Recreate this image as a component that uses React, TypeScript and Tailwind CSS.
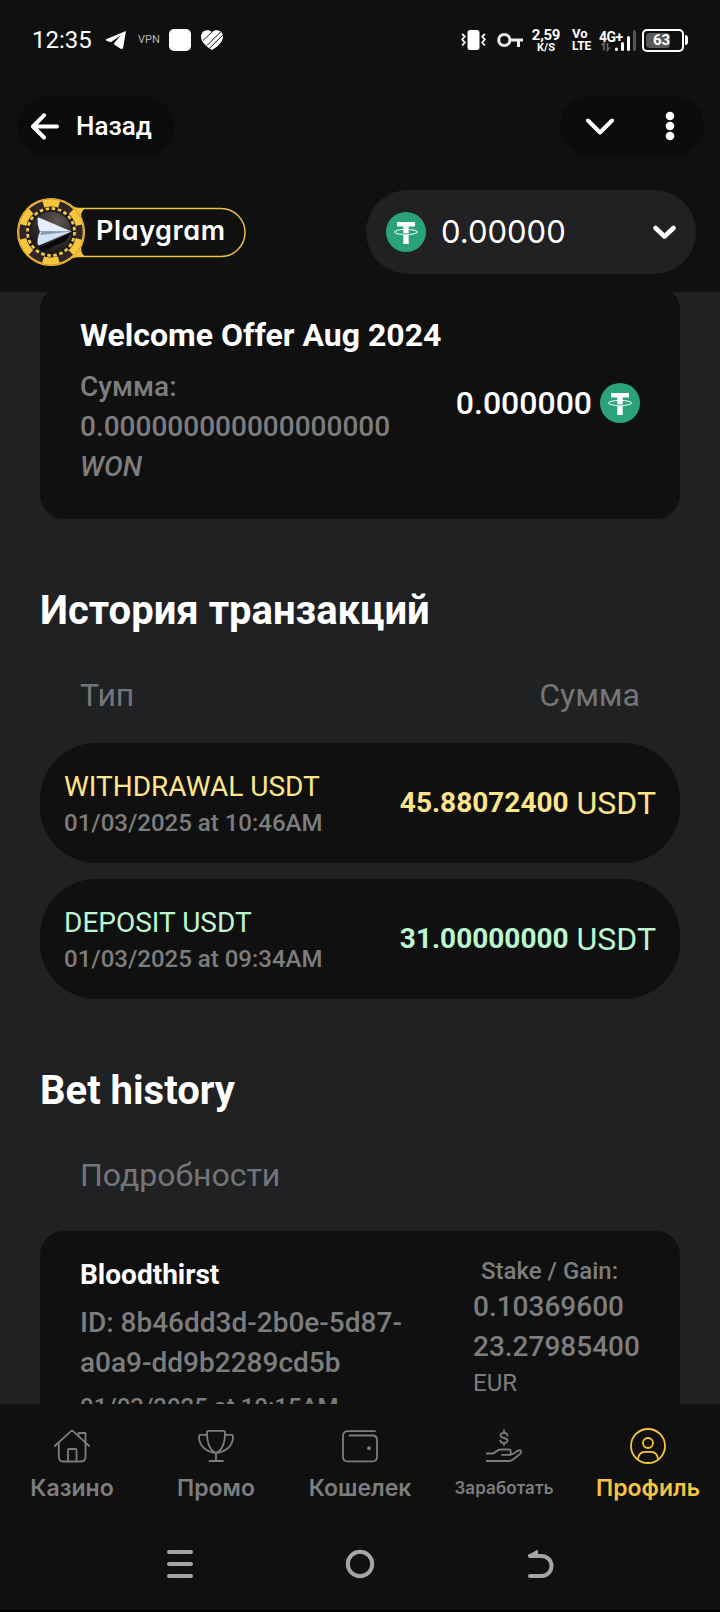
import React from 'react';

const StatusBar: React.FC = () => {
  return (
    <div className="flex h-24 items-start justify-between pl-8 pr-8 pt-6 text-white">
      <div className="flex h-8 items-center">
        <span className="w-[60px] text-[24px] leading-8">12:35</span>
        <svg className="ml-3.5" width="20" height="18" viewBox="0 0 20 18" fill="#fff">
          <path d="M20 0 L0 8.2 L0 9.6 L4.8 11.2 L15 4.2 L8.2 12 L8.2 13.4 L15 18 L17 17.6 Z" />
        </svg>
        <span className="ml-3 w-5 text-[11px] text-[#b5b5b5]">VPN</span>
        <span className="ml-[11px] size-[22px] rounded-[5px] bg-white" />
        <svg className="ml-2.5" width="22" height="20" viewBox="0 0 22 20">
          <path d="M11 2 C14-1 22-.5 22 7 C22 12 16 17 11 20 C6 17 0 12 0 7 C0-.5 8-1 11 2Z" fill="#fff" />
          <path d="M2 10.5 L12.5.5 M6 15.5 L20 1.5 M8.8 18 L22 4.8" stroke="#111" strokeWidth="1" />
        </svg>
      </div>
      <div className="flex h-8 items-center">
        <svg width="25" height="22" viewBox="0 0 25 22">
          <rect x="6.5" y="1" width="12" height="20" rx="2.5" fill="#fff" />
          <path d="M1.2 5 L3.8 7.5 L1.2 10.5 L3.8 13.5 L1.2 16.5 M23.8 5 L21.2 7.5 L23.8 10.5 L21.2 13.5 L23.8 16.5" fill="none" stroke="#fff" strokeWidth="1.8" />
        </svg>
        <svg className="ml-[11px]" width="26" height="16" viewBox="0 0 26 16" fill="none" stroke="#eee" strokeWidth="3">
          <circle cx="7.3" cy="8" r="5.6" />
          <path d="M13 8 H26 M21.5 8 V15" />
        </svg>
        <div className="ml-[7px] flex w-8 flex-col items-center font-bold leading-3">
          <span className="text-[15px] leading-[14px] tracking-[-0.3px]">2,59</span>
          <span className="text-[11px] leading-[11px]">K/S</span>
        </div>
        <div className="ml-2 flex w-6 flex-col pl-0.5 font-bold">
          <span className="text-[13px] leading-[12px]">Vo</span>
          <span className="text-[12px] leading-[12px]">LTE</span>
        </div>
        <div className="relative ml-[5px] h-6 w-[38px]">
          <span className="absolute left-0 top-px text-[14px] font-bold leading-4 tracking-[-0.5px]">4G+</span>
          <svg className="absolute left-0 top-0" width="38" height="24" viewBox="0 0 38 24">
            <path d="M5 22.500 V15 L2.6 17.300 M8.500 15 V22 L10.900 19.5" fill="none" stroke="#666" strokeWidth="1.7" />
            <g strokeWidth="3" strokeLinecap="round" stroke="#fff">
              <path d="M17.500 21 V21.5 M23.500 15.500 V21.5 M29.500 9.500 V21.5" />
              <path d="M35.500 3.500 V21.5" stroke="#555" />
            </g>
          </svg>
        </div>
        <div className="ml-[5px] flex items-center">
          <div className="flex h-[23px] w-[42px] items-center rounded-[5px] border-2 border-white pl-0.5">
            <span className="h-[15px] w-6 rounded-sm bg-[#5a5a5a]" />
            <span className="-ml-[17px] text-[15px] font-bold leading-4">63</span>
          </div>
          <span className="ml-px h-2.5 w-[3px] rounded-r-sm bg-white" />
        </div>
      </div>
    </div>
  );
};

const TitleBar: React.FC = () => {
  return (
    <div className="flex h-[61px] items-center justify-between pl-[17px] pr-4">
      <div className="flex h-full w-[158px] items-center rounded-full bg-[#0b0b0b] pl-3.5">
        <svg width="28" height="28" viewBox="0 0 28 28" fill="none" stroke="#fff" strokeWidth="4" strokeLinecap="round" strokeLinejoin="round">
          <path d="M26 13.500 H2.5 M13 2.300 L2 13.500 L13 24.500" />
        </svg>
        <span className="ml-[17px] text-[26px] font-medium text-white">Назад</span>
      </div>
      <div className="flex h-full w-36 items-center rounded-full bg-[#0b0b0b] pb-px pl-[26px]">
        <svg width="28" height="17" viewBox="0 0 28 17" fill="none" stroke="#fff" strokeWidth="4" strokeLinecap="round" strokeLinejoin="round">
          <path d="M2 2.500 L14 14.500 L26 2.500" />
        </svg>
        <svg className="ml-[51px]" width="10" height="30" viewBox="0 0 10 30" fill="#fff">
          <circle cx="5" cy="5" r="4.3" />
          <circle cx="5" cy="15" r="4.3" />
          <circle cx="5" cy="25" r="4.3" />
        </svg>
      </div>
    </div>
  );
};

const Logo: React.FC = () => {
  return (
    <div className="relative h-[70px] w-[232px]">
      <svg className="absolute inset-0" width="232" height="70" viewBox="0 0 232 70">
        <path d="M60 11.5 H205 A24 24 0 0 1 205 59.5 H60" fill="none" stroke="#eabf44" strokeWidth="1.5" />
        <path d="M54 8 Q60 11.5 69 11.5 C64 15 64.500 20 67 26 L69 35 L67 45 C64.500 50 64 56 69 59.500 Q60 59.500 54 62 Z" fill="#f3c33c" />
        <circle cx="35" cy="35" r="34" fill="#f6c63d" />
        <circle cx="35" cy="35" r="33" fill="none" stroke="#d39a2b" strokeWidth="1" />
        <circle cx="35" cy="35" r="28.500" fill="none" stroke="#30262a" strokeWidth="6.500" strokeDasharray="14 15.845" strokeDashoffset="7" />
        <circle cx="35" cy="35" r="25.500" fill="#1d191a" />
        <circle cx="35" cy="35" r="23.500" fill="none" stroke="#f3c743" strokeWidth="2.800" strokeDasharray="3.600 2.552" />
        <circle cx="35" cy="35" r="20.500" fill="url(#chip)" />
        <path d="M23 51 L56 35 L50 44 L27 54 Z" fill="#080808" />
        <path d="M21.500 21 Q22 20 24 21 L55.500 34.500 L24 35 Q21 28 21.500 21Z" fill="#e3efff" />
        <path d="M24 35 L55.500 34.500 L24 48 Q21.500 49 21.500 46 Q21.500 39 24 35Z" fill="#cfe2f8" />
        <path d="M24 34 L55.500 34.500 L24 38 L25.500 36Z" fill="#8896aa" />
        <defs>
          <radialGradient id="chip" cx="0.65" cy="0.25" r="0.8">
            <stop offset="0" stopColor="#5c5854" />
            <stop offset="1" stopColor="#171516" />
          </radialGradient>
        </defs>
      </svg>
      <span className="absolute left-[80px] top-[14px] font-['Inter'] text-[27px] font-semibold leading-10 tracking-[0.6px] text-white [font-feature-settings:'cv11']">Playgram</span>
    </div>
  );
};

const Tether: React.FC = () => {
  return (
    <svg className="shrink-0" width="40" height="40" viewBox="0 0 40 40">
      <circle cx="20" cy="20" r="20" fill="#2aa27c" />
      <path d="M11 10 H29 V14.500 H22.700 V32 H17.300 V14.500 H11 Z" fill="#fff" />
      <ellipse cx="20" cy="20" rx="11.500" ry="2.600" fill="none" stroke="#fff" strokeWidth="1" />
      <path d="M17 21.800 Q20 22.200 23 21.800" stroke="#2aa27c" strokeWidth="0.900" fill="none" />
    </svg>
  );
};

const Header: React.FC = () => {
  return (
    <header className="flex h-[135px] items-start justify-between pl-4 pr-6 pt-[33px]">
      <div className="pt-[7px]">
        <Logo />
      </div>
      <div className="flex h-[84px] w-[330px] items-center rounded-full bg-[#212123] pl-5 pr-5">
        <Tether />
        <span className="ml-[15px] font-['Inter'] text-[31px] text-white">0.00000</span>
        <svg className="ml-auto" width="23" height="14" viewBox="0 0 23 14" fill="none" stroke="#fff" strokeWidth="4.500" strokeLinecap="round" strokeLinejoin="round">
          <path d="M2.500 3 L11.500 11.500 L20.500 3" />
        </svg>
      </div>
    </header>
  );
};

const transactions = [
  { type: 'WITHDRAWAL USDT', date: '01/03/2025 at 10:46AM', amount: '45.88072400', color: 'text-[#fde68a]' },
  { type: 'DEPOSIT USDT', date: '01/03/2025 at 09:34AM', amount: '31.00000000', color: 'text-[#bbf7d0]' },
];

const Content: React.FC = () => {
  return (
    <main className="h-[1112px] overflow-hidden bg-[#202123] px-10">
      <div className="-mt-1.5 flex h-[233px] items-center justify-between rounded-3xl bg-[#101010] px-10">
        <div className="h-full pt-[29px]">
          <h3 className="text-[32px] font-bold leading-10 text-white">Welcome Offer Aug 2024</h3>
          <div className="mt-3 text-[28px] font-medium leading-10 text-[#7d7d7f]">
            <p>Сумма:</p>
            <p>0.000000000000000000</p>
            <p className="italic">WON</p>
          </div>
        </div>
        <div className="-ml-10 flex items-center gap-2">
          <span className="text-[32px] font-medium text-white">0.000000</span>
          <Tether />
        </div>
      </div>

      <h2 className="mt-[62px] text-[40px] font-bold leading-[60px] text-white">История транзакций</h2>
      <div className="mt-[34px] flex justify-between px-10 text-[32px] leading-10 text-[#757577]">
        <span>Тип</span>
        <span>Сумма</span>
      </div>
      <div className="mt-7 flex flex-col gap-4">
        {transactions.map((t) => (
          <div key={t.type} className="flex h-[120px] items-center justify-between rounded-[56px] bg-[#101010] px-6">
            <div>
              <p className={`pt-0.5 text-[28px] leading-[38px] ${t.color}`}>{t.type}</p>
              <p className="text-[24px] font-medium leading-[34px] text-[#7d7d7f]">{t.date}</p>
            </div>
            <div className={`flex items-center gap-2 ${t.color}`}>
              <span className="text-[28px] font-bold">{t.amount}</span>
              <span className="text-[32px]">USDT</span>
            </div>
          </div>
        ))}
      </div>

      <h2 className="mt-[62px] text-[40px] font-bold leading-[60px] text-white">Bet history</h2>
      <p className="mt-[34px] px-10 text-[32px] leading-10 text-[#757577]">Подробности</p>
      <div className="mt-9 flex h-[260px] justify-between rounded-3xl bg-[#101010] px-10 pt-6 font-medium text-[#7d7d7f]">
        <div>
          <h3 className="text-[28px] font-bold leading-10 text-white">Bloodthirst</h3>
          <p className="mt-2 w-[340px] text-[28px] leading-10">ID: 8b46dd3d-2b0e-5d87-a0a9-dd9b2289cd5b</p>
          <p className="mt-[7px] text-[24px] leading-[34px]">01/03/2025 at 10:15AM</p>
        </div>
        <div className="w-[167px]">
          <p className="pl-2 pt-px text-[24px] leading-[31px]">Stake / Gain:</p>
          <p className="text-[28px] leading-10">0.10369600</p>
          <p className="text-[28px] leading-10">23.27985400</p>
          <p className="text-[24px] font-normal leading-8">EUR</p>
        </div>
      </div>
    </main>
  );
};

const tabs = [
  {
    label: 'Казино',
    style: 'text-[#7d7d7f] text-[23px]',
    icon: (
      <>
        <path d="M.8 18 L17 3.200 Q18 2.300 19 3.200 L35.200 18" />
        <path d="M4.800 15 V29 Q4.800 33.500 9 33.500 H27 Q31.500 33.500 31.500 29 V15 M24.500 7.500 V5 H31.500 V14" />
        <path d="M14 33 V22 Q14 21 15 21 H21.500 Q22.500 21 22.500 22 V33" />
      </>
    ),
  },
  {
    label: 'Промо',
    style: 'text-[#7d7d7f] text-[23px]',
    icon: (
      <>
        <path d="M9 4.500 Q9 2.800 10.700 2.800 H25.300 Q27 2.800 27 4.500 C27 14 25 22 18 25 C11 22 9 14 9 4.500Z" />
        <path d="M9.300 6.800 H2.500 Q1 6.800 1 8.500 C1 18 8 24 18 25 C28 24 35 18 35 8.500 Q35 6.800 33.500 6.800 H26.700 M18 25 V33 M11.500 33 H25" />
      </>
    ),
  },
  {
    label: 'Кошелек',
    style: 'text-[#7d7d7f] text-[23px]',
    icon: (
      <>
        <path d="M33 3.200 H6 Q1 3.200 1 8 V29 Q1 33.300 5.500 33.300 H30.500 Q35 33.300 35 29 V12 Q35 7.500 30.500 7.500 H7.500" />
        <circle cx="27" cy="20.200" r="1" fill="currentColor" />
      </>
    ),
  },
  {
    label: 'Заработать',
    style: 'text-[#7d7d7f] text-[17px] tracking-[0.1px]',
    icon: (
      <>
        <path d="M21.500 7.500 C21 4 14.500 4 14.500 7.500 C14.500 11 21.500 9 21.500 12.500 C21.500 16 14.500 15.800 14.300 12.500 M18 2.500 V5 M18 15 V17" />
        <path d="M.5 25.500 H6 Q8 25.500 10 23.500 Q12.500 21.500 15 21.500 H23 Q26 22 24 26.800 H16 M24.500 26.800 Q28 26 31 23.200 Q33.500 21.300 35 23 Q36 24.500 34 26 L27 31.500 Q25 33 22.500 33 H.5" />
      </>
    ),
  },
  {
    label: 'Профиль',
    style: 'text-[#f5c542] text-[23px]',
    icon: (
      <>
        <circle cx="18" cy="18" r="17" />
        <circle cx="18" cy="15" r="5" />
        <path d="M8 31.500 Q8.500 24 15 23.800 H21 Q27.500 24 28 31.500" />
      </>
    ),
  },
];

const TabBar: React.FC = () => {
  return (
    <nav className="grid h-28 grid-cols-5 pt-6">
      {tabs.map((tab) => (
        <div key={tab.label} className={`flex flex-col items-center font-['Inter'] font-semibold ${tab.style}`}>
          <svg width="36" height="36" viewBox="0 0 36 36" fill="none" stroke="currentColor" strokeWidth="1.800" strokeLinecap="round" strokeLinejoin="round">
            {tab.icon}
          </svg>
          <span className="mt-2 whitespace-nowrap leading-8">{tab.label}</span>
        </div>
      ))}
    </nav>
  );
};

const SystemNav: React.FC = () => {
  return (
    <div className="flex h-24 items-start justify-between border-b-2 border-black px-[166px] pt-[33px]">
      <svg width="28" height="30" viewBox="0 0 28 30" stroke="#a5a5a5" strokeWidth="4" strokeLinecap="round">
        <path d="M3 3 H25 M3 15 H25 M3 27 H25" />
      </svg>
      <svg width="30" height="30" viewBox="0 0 30 30" fill="none" stroke="#a5a5a5" strokeWidth="4">
        <circle cx="15" cy="15" r="12.200" />
      </svg>
      <svg width="28" height="30" viewBox="0 0 28 30" fill="none" stroke="#a5a5a5" strokeWidth="4" strokeLinecap="round" strokeLinejoin="round">
        <path d="M4 7 H15.500 A10 10 0 0 1 15.500 27 H4" />
        <path d="M3 6.500 L11 2 V6.500 Z" strokeWidth="2" fill="#a5a5a5" />
      </svg>
    </div>
  );
};

const App: React.FC = () => {
  return (
    <div className="h-[1612px] w-[720px] overflow-hidden bg-[#101010] font-['Roboto',sans-serif]">
      <StatusBar />
      <TitleBar />
      <Header />
      <Content />
      <TabBar />
      <SystemNav />
    </div>
  );
};

export default App;
